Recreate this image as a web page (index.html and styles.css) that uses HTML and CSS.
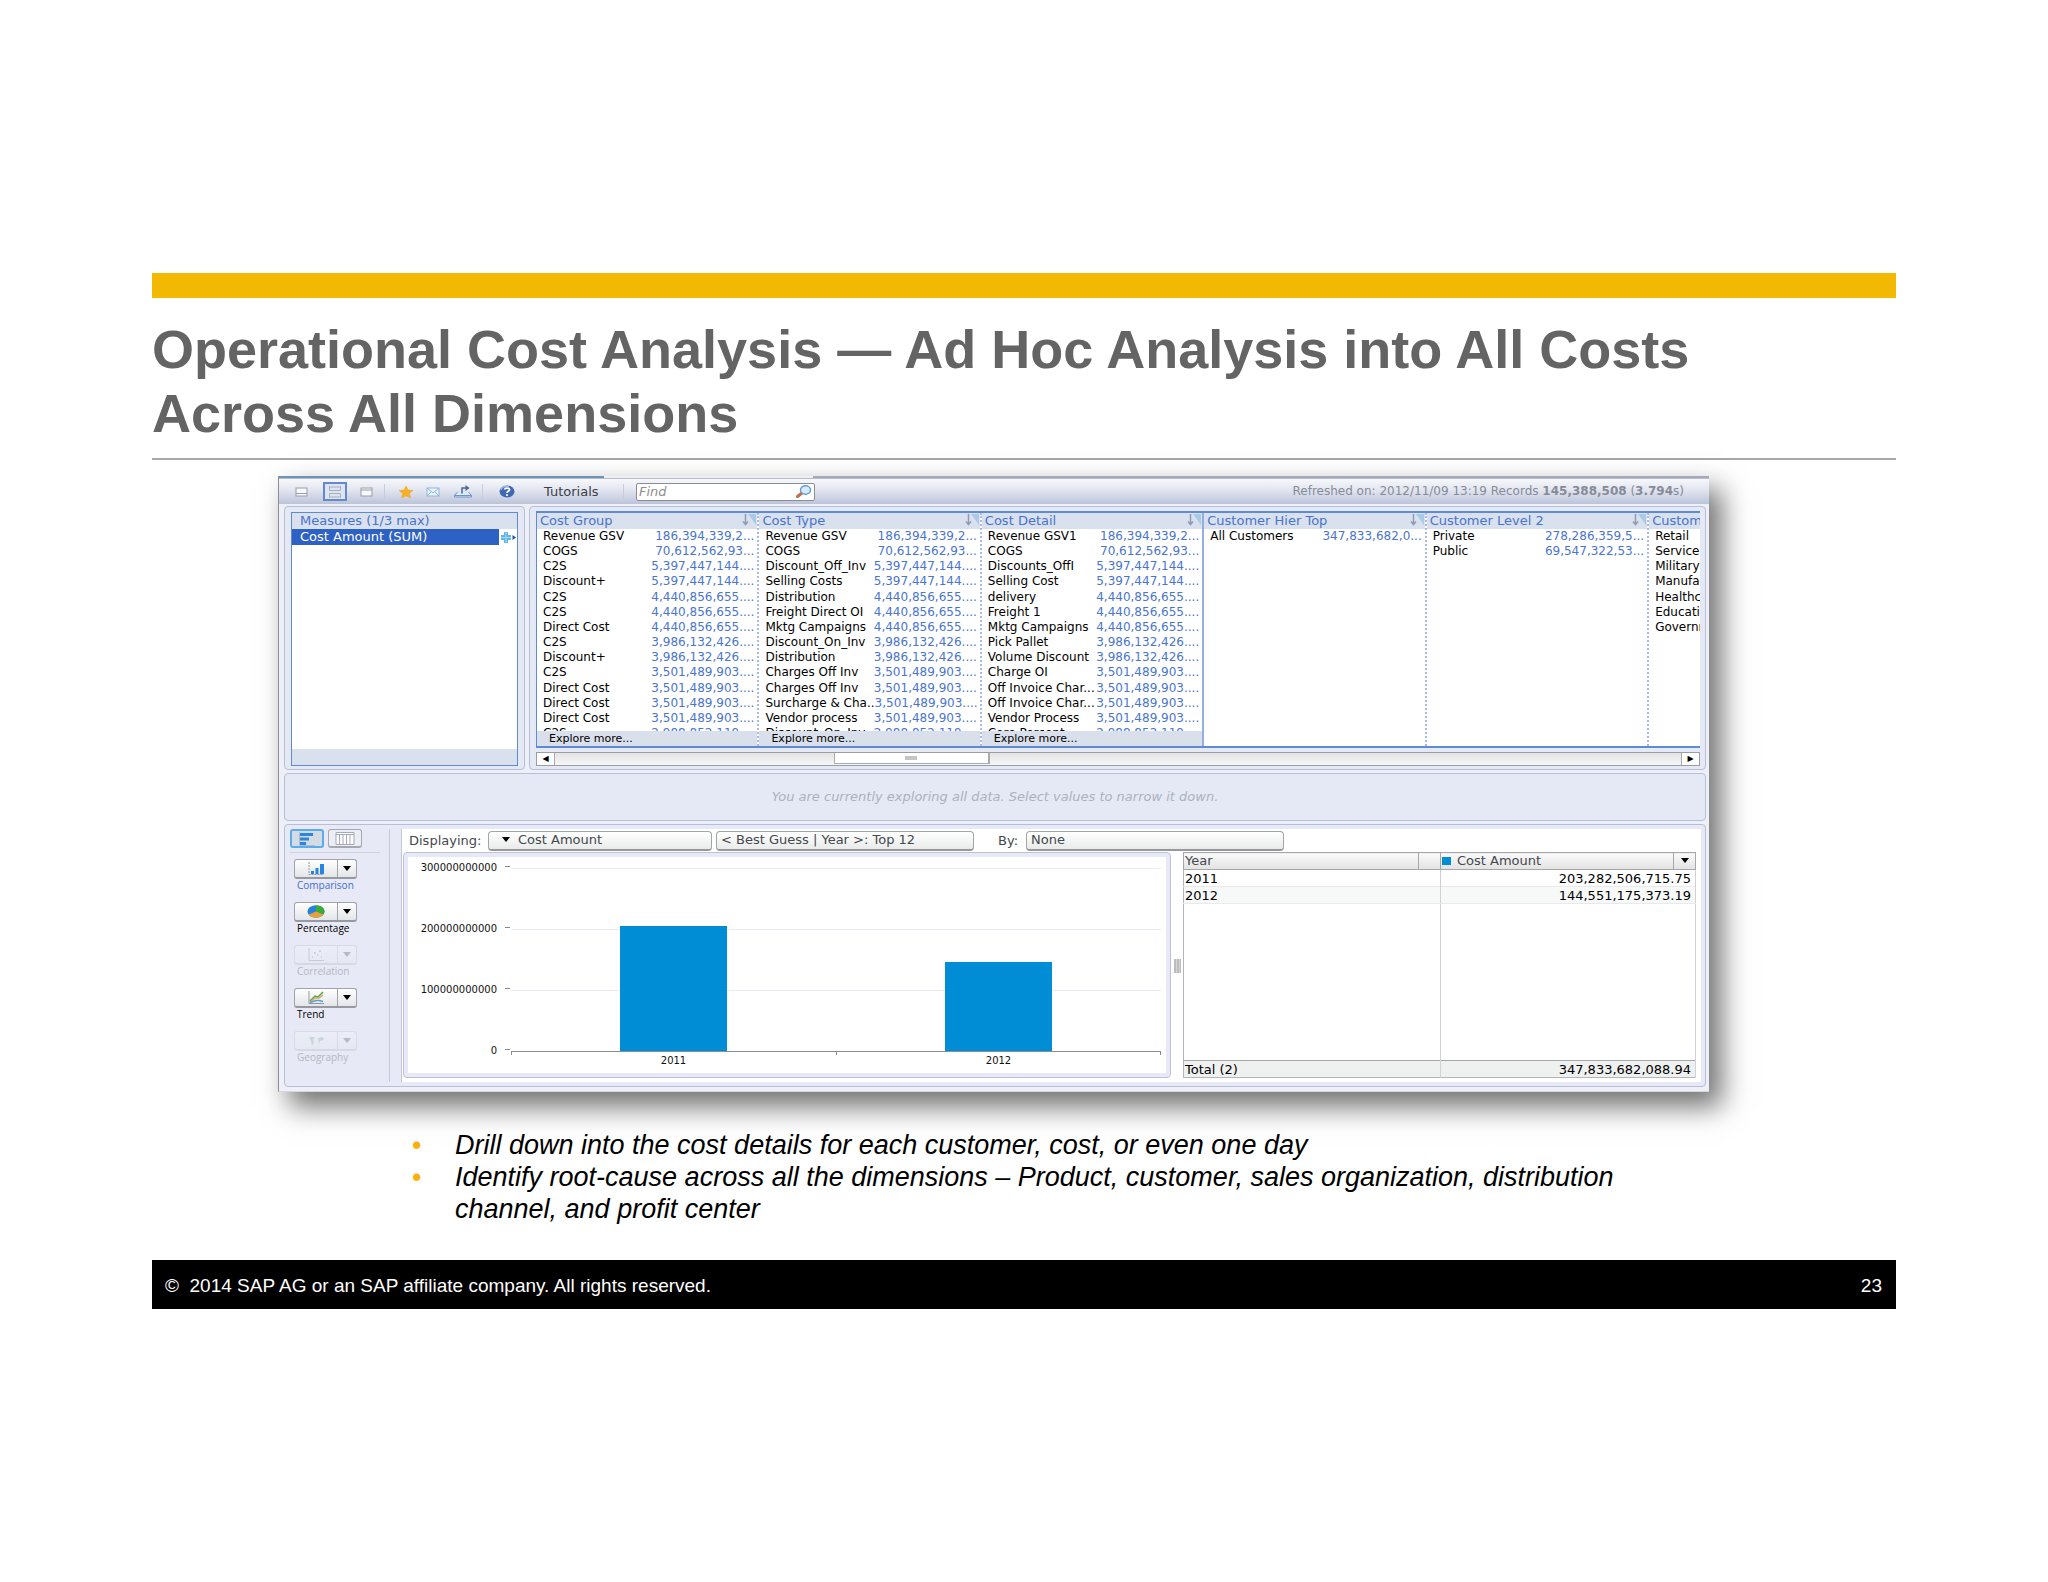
FILE: index.html
```html
<!DOCTYPE html>
<html lang="en">
<head>
<meta charset="utf-8">
<title>Operational Cost Analysis</title>
<link rel="stylesheet" href="styles.css">
</head>
<body>
<main class="slide">
  <div class="accent"></div>
  <h1 class="title">Operational Cost Analysis — Ad Hoc Analysis into All Costs<br>Across All Dimensions</h1>

  <section class="app" aria-label="Data explorer">
    <div class="topline"><i class="topline-blue"></i><i class="topline-light"></i></div>
    <header class="toolbar">
      <button class="tool layout" aria-label="Layout bottom"><svg width="14" height="10"><rect x="1" y="1" width="11" height="8" fill="#f8f9fc" stroke="#989dac"/><path d="M1 6.500h11" stroke="#989dac"/></svg></button>
      <button class="tool layout selected" aria-label="Layout split"><svg width="14" height="12"><path d="M1.500 0v4.500h11V0M1.500 11.500v-4h11v4M1 11h12M1 1h12" fill="none" stroke="#a9aebb"/></svg></button>
      <button class="tool layout" aria-label="Layout top"><svg width="14" height="10"><rect x="1" y="1" width="11" height="8" fill="#f8f9fc" stroke="#989dac"/><path d="M1 3h11" stroke="#989dac"/></svg></button>
      <span class="sep"></span>
      <button class="tool star" aria-label="Bookmark"><svg width="16" height="12" viewBox="0 0 16 12"><path d="M8 0l2 4 5 .5-3.700 3L12.500 12 8 9.700 3.500 12l1.200-4.500L1 4.500 6 4z" fill="#f9b023" stroke="#e9a02a" stroke-width=".5"/></svg></button>
      <button class="tool mail" aria-label="Email"><svg width="15" height="10" viewBox="0 0 15 10"><rect x="1" y="1" width="12" height="8" fill="#eaf4fd" stroke="#8fb6e0"/><path d="M1 1l6 5 6-5M1 9l4-4M13 9L9 5" fill="none" stroke="#8fb6e0"/></svg></button>
      <button class="tool export" aria-label="Export"><svg width="20" height="13" viewBox="0 0 20 13"><path d="M4.500 7L1.500 10.500V12h17v-1.500L15.500 7M1.500 10.500h17" fill="#dce9fa" stroke="#6d93cb"/><path d="M9 8.500V3h5" fill="none" stroke="#4d6892" stroke-width="1.500"/><path d="M12.500 0l4 3-4 3z" fill="#4d6892"/></svg></button>
      <span class="sep"></span>
      <button class="tool help" aria-label="Help"><svg width="16" height="13" viewBox="0 0 16 13"><ellipse cx="8" cy="6.500" rx="7.500" ry="6" fill="#4268b4"/><path d="M2 5a6 4 0 0 1 8-3.500" stroke="#9db8e4" stroke-width="1.500" fill="none"/><path d="M5.500 4.500C6 2.500 11 2.500 10.500 5 10.300 6.300 8 6 8 8M8 9.300V11" stroke="#fff" stroke-width="1.700" fill="none"/></svg></button>
      <a class="tutorials" href="#">Tutorials</a>
      <span class="sep"></span>
      <label class="find"><input type="text" placeholder="Find" aria-label="Find"><svg width="16" height="13" viewBox="0 0 16 13"><path d="M6 8L1.500 11.500" stroke="#c0704a" stroke-width="3" stroke-linecap="round"/><ellipse cx="9.500" cy="5" rx="5" ry="4.200" fill="#d6ebfc" stroke="#6a9bd8" stroke-width="1.500"/></svg></label>
      <p class="status">Refreshed on: 2012/11/09 13:19 Records <b>145,388,508</b> (<b>3.794</b>s)</p>
    </header>

    <div class="explore">
      <section class="panel measures">
        <div class="measure-box">
          <h2 class="head">Measures (1/3 max)</h2>
          <div class="measure"><span>Cost Amount (SUM)</span><svg width="17" height="13" viewBox="0 0 17 13"><path d="M4 1h4v11H4zM1 4h10v5H1z" fill="#62b5e9"/><path d="M1 6.500h10M6 1v11" stroke="#a5d8f6"/><path d="M12.500 4l3.500 2.500L12.500 9z" fill="#2450a8"/></svg></div>
          <div class="measure-foot"></div>
        </div>
      </section>
      <section class="panel facets">
        <div class="columns" id="columns"></div>
        <div class="scroll"><button aria-label="Scroll left">◀</button><div class="track"><div class="thumb"><i></i></div></div><button aria-label="Scroll right">▶</button></div>
      </section>
    </div>

    <p class="panel notice">You are currently exploring all data. Select values to narrow it down.</p>

    <section class="panel visual">
      <nav class="side">
        <div class="tabs">
          <button class="tab active" aria-label="Chart"><svg width="18" height="14" viewBox="0 0 18 14"><path d="M2 1h13v3H2zM2 5.500h9v3H2zM2 10h6v3H2z" fill="#2c86dc"/><path d="M1.500 0v13.500H17" stroke="#b3bccb" fill="none"/></svg></button>
          <button class="tab" aria-label="Table"><svg width="20" height="13" viewBox="0 0 20 13"><path d="M1 .5h18v12H1zM1 2.500h18M4.500 2v10M8 2v10M11.500 2v10M15 2v10" fill="#fff" stroke="#a2a9bd"/></svg></button>
        </div>
        <div class="kind current"><div class="split"><button aria-label="Comparison chart"><svg width="18" height="13" viewBox="0 0 18 13"><path d="M2 0v12.500h15" fill="none" stroke="#8f97a5" stroke-dasharray="2 1"/><path d="M4 9h3v3H4zM8.500 6h3v6h-3zM13 2h4v10h-4z" fill="#2886e2"/></svg></button><button aria-label="Comparison options"><i class="arrow"></i></button></div><span>Comparison</span></div>
        <div class="kind"><div class="split"><button aria-label="Percentage chart"><svg width="18" height="13" viewBox="0 0 18 13"><ellipse cx="9" cy="6.500" rx="8.500" ry="6.200" fill="#2582dc"/><path d="M9 6.500V.3a8.500 6.200 0 0 1 7.400 9.200z" fill="#3aab36"/><path d="M9 6.500l7.400 3a8.500 6.200 0 0 1-14.800 0z" fill="#e6a03a"/></svg></button><button aria-label="Percentage options"><i class="arrow"></i></button></div><span>Percentage</span></div>
        <div class="kind off"><div class="split"><button disabled aria-label="Correlation chart"><svg width="18" height="13" viewBox="0 0 18 13"><path d="M2 0v12.500h15" fill="none" stroke="#555"/><path d="M5 9h1M7 5h2M10 7h1M12 3h2M14 9h1" stroke="#777" stroke-width="2"/></svg></button><button disabled aria-label="Correlation options"><i class="arrow"></i></button></div><span>Correlation</span></div>
        <div class="kind"><div class="split"><button aria-label="Trend chart"><svg width="18" height="13" viewBox="0 0 18 13"><path d="M2 0v12.500h15" fill="none" stroke="#8f97a5"/><path d="M3 10l5-5 3 1 5-5" fill="none" stroke="#4eae46" stroke-width="1.500"/><path d="M3 11l5-4h4l4-3" fill="none" stroke="#e1a257" stroke-width="1.500"/><path d="M3 11.500l6-2h3l4 1" fill="none" stroke="#5d9ee0" stroke-width="1.500"/></svg></button><button aria-label="Trend options"><i class="arrow"></i></button></div><span>Trend</span></div>
        <div class="kind off"><div class="split"><button disabled aria-label="Geography chart"><svg width="18" height="13" viewBox="0 0 18 13"><path d="M2 3h6L6 6l1 2-2 4-1-5zM11 4l5-1 1 3-4 1-1 3z" fill="#4c9a52"/></svg></button><button disabled aria-label="Geography options"><i class="arrow"></i></button></div><span>Geography</span></div>
      </nav>
      <div class="canvas">
        <div class="controls">
          <span class="lbl">Displaying:</span>
          <button class="pick first"><i class="arrow"></i>Cost Amount</button>
          <button class="pick">&lt; Best Guess | Year &gt;: Top 12</button>
          <span class="lbl by">By:</span>
          <button class="pick">None</button>
        </div>
        <div class="results">
          <div class="chart">
            <div class="yaxis"><span>300000000000</span><span>200000000000</span><span>100000000000</span><span>0</span></div>
            <div class="plot">
              <div class="grid"><i></i><i></i><i></i></div>
              <div class="bars"><div class="slot"><div class="bar" style="height:125px"></div></div><div class="slot"><div class="bar" style="height:89px"></div></div></div>
              <div class="ticks"><i></i><i></i></div>
              <div class="xaxis"><span>2011</span><span>2012</span></div>
            </div>
          </div>
          <div class="grip"><i></i></div>
          <table class="data">
            <thead><tr><th class="c1">Year</th><th class="c2"></th><th class="c3"><i class="swatch"></i>Cost Amount</th><th class="c4"><button aria-label="Column menu"><i class="arrow"></i></button></th></tr></thead>
            <tbody>
              <tr><td colspan="2">2011</td><td colspan="2">203,282,506,715.75</td></tr>
              <tr class="alt"><td colspan="2">2012</td><td colspan="2">144,551,175,373.19</td></tr>
              <tr class="fill"><td colspan="2"></td><td colspan="2"></td></tr>
            </tbody>
            <tfoot><tr><td colspan="2">Total (2)</td><td colspan="2">347,833,682,088.94</td></tr></tfoot>
          </table>
        </div>
      </div>
    </section>
  </section>

  <ul class="points">
    <li>Drill down into the cost details for each customer, cost, or even one day</li>
    <li>Identify root-cause across all the dimensions – Product, customer, sales organization, distribution channel, and profit center</li>
  </ul>

  <footer class="foot"><span>©&nbsp; 2014 SAP AG or an SAP affiliate company. All rights reserved.</span><span>23</span></footer>
</main>
<script src="facets.js"></script>
</body>
</html>
```
FILE: styles.css
```css
* { box-sizing: border-box; }

body {
  margin: 0;
  background: #fff;
  color: #000;
  font-family: "Liberation Sans", Arial, sans-serif;
}

button, input { font: inherit; color: inherit; margin: 0; padding: 0; }
h1, h2, p, ul { margin: 0; padding: 0; }
svg { display: block; }

.slide { padding: 273px 152px 0; }
.accent { height: 25px; background: #f3b900; }
.title {
  height: 162px;
  padding-top: 19px;
  border-bottom: 2px solid #a8a8a8;
  color: #646464;
  font-size: 54px;
  line-height: 64px;
}

/* explorer window */
.app {
  margin: 16px 187px 0 126px;
  background: #eef0f7;
  border-left: 1px solid #8d8f94;
  border-bottom: 1px solid #d8d8d8;
  box-shadow: 12px 14px 26px 1px rgba(0, 0, 0, .55);
  font-family: "DejaVu Sans", Verdana, sans-serif;
  font-size: 13px;
  line-height: 15px;
}
.topline { display: flex; height: 3px; background: #a5a9c0; border-bottom: 1px solid #b9bbc6; }
.topline-blue { width: 325px; background: #6e93b8; }
.topline-light { width: 209px; background: #eceef2; }

.toolbar {
  display: flex;
  align-items: center;
  height: 25px;
  padding: 0 25px 0 11px;
  background: linear-gradient(#f6f8fb, #e2e5ef 45%, #bcc4d9);
  color: #3c3f48;
}
.tool { display: grid; place-items: center; border: 0; background: none; }
.layout { width: 24px; height: 19px; margin-right: 7px; }
.layout.selected { border: 2px solid #6488d0; background: #dde5f3; width: 24px; margin: 0 8px 0 2px; }
.layout + .sep { margin-left: -2px; }
.sep { width: 1px; height: 15px; background: #c9cdd9; }
.star { margin-left: 13px; }
.mail { margin-left: 12px; }
.export { margin-left: 12px; margin-right: 9px; }
.help { margin: 0 29px 0 16px; }
.tutorials { width: 79px; color: inherit; text-decoration: none; }
.find {
  display: flex;
  align-items: center;
  width: 179px;
  height: 18px;
  margin-left: 12px;
  padding: 0 2px;
  background: #fff;
  border: 1px solid #8a8d94;
  border-radius: 2px;
}
.find input { flex: 1; min-width: 0; border: 0; outline: 0; background: none; font-style: italic; line-height: 14px; }
.find input::placeholder { color: #8f8f8f; opacity: 1; }
.status { margin-left: auto; color: #868b98; font-size: 12px; }

.panel { background: #e4e9f5; border: 1px solid #b8bdd8; border-radius: 4px; }
.explore { display: flex; gap: 4px; padding: 2px 3px 0 5px; }
.measures { flex: none; width: 241px; height: 264px; padding: 5px 6px; }
.measure-box { display: flex; flex-direction: column; height: 254px; background: #fff; border: 1px solid #5f8bd3; }
.head { height: 16px; padding: 0 8px; background: #dae1ee; color: #4873cc; font-size: 13px; font-weight: 400; line-height: 16px; white-space: nowrap; }
.measure { display: flex; align-items: center; gap: 1px; color: #fff; }
.measure span { flex: 1; padding-left: 8px; background: #2d61c4; line-height: 16px; }
.measure-foot { margin-top: auto; height: 16px; background: #dae1ee; }

.facets { flex: 1; min-width: 0; padding: 4px 5px 0 6px; }
.columns {
  display: grid;
  grid-template-columns: repeat(5, 223fr) 51fr;
  height: 237px;
  overflow: hidden;
  background: #fff;
  border: solid #5f8bd3;
  border-width: 2px 0 2px 1px;
}
.facet { min-width: 0; overflow: hidden; border-right: 2px dotted #a8b9ea; }
.facet:nth-child(3) { border-right: 2px solid #93afe0; }
.facet:last-child { border-right: 0; }
.facet .head { display: flex; justify-content: space-between; padding: 0 0 0 3px; }
.values { display: grid; grid-template-rows: repeat(13, 1fr) 5px; height: 202px; list-style: none; font-size: 12px; }
.values li { display: flex; justify-content: space-between; overflow: hidden; padding: 0 3px 0 6px; white-space: nowrap; }
.values b { color: #4a75cf; font-weight: 400; }
.more { display: block; width: 100%; height: 15px; padding-left: 12px; border: 0; background: #dadfec; text-align: left; font-size: 11px; line-height: 14px; }

.scroll { display: flex; height: 14px; margin-top: 4px; border: 1px solid #9b9da2; }
.scroll button { width: 17px; border: 0; background: #fff; font-size: 8px; line-height: 10px; }
.track { flex: 1; padding-left: 24%; border: solid #a6a8ad; border-width: 0 1px; background: linear-gradient(#e4e4e4, #f6f6f6); }
.thumb { width: 156px; height: 11px; padding-top: 3px; background: #fff; border: solid #a9abb0; border-width: 0 2px 1px 1px; }
.thumb i { display: block; width: 12px; height: 4px; margin: 0 auto; background: #c5c5c5; }

.notice { margin: 3px 3px 3px 5px; height: 48px; line-height: 45px; text-align: center; font-style: italic; color: #acb1bd; }

.visual { display: flex; height: 263px; margin: 0 3px 4px 5px; padding: 4px; background: #e7e9f6; }
.side { width: 101px; flex: none; padding-left: 1px; border-right: 1px solid #c6c8da; }
.tabs { display: flex; gap: 4px; width: 90px; height: 24px; margin-bottom: 6px; border-bottom: 1px solid #d0d2e0; }
.tab { display: grid; place-items: center; width: 34px; height: 19px; border: 1px solid #a5a8b0; border-bottom-width: 2px; border-radius: 3px; background: #eceef3; }
.tab.active { border: 2px solid #5aaced; background: #d3dce4; }
.kind { height: 43px; padding-left: 4px; font-family: "Open Sans", sans-serif; font-size: 10px; line-height: 13px; }
.kind span { display: block; padding-left: 3px; }
.current span { color: #3f6fd0; }
.split { display: flex; width: 63px; height: 20px; border: 1px solid #a0a3aa; border-bottom: 2px solid #96999f; border-radius: 3px; background: linear-gradient(#fff, #e4e5e8); }
.split button { display: grid; place-items: center; flex: 1; border: 0; background: none; }
.split button + button { flex: none; width: 19px; border-left: 1px solid #a0a3aa; }
.off .split { opacity: .2; }
.off span { color: #b4b7c3; }
.arrow { display: inline-block; width: 0; border: solid transparent; border-width: 5px 4px 0; border-top-color: #000; }

.canvas { display: flex; flex-direction: column; flex: 1; min-width: 0; margin-left: 11px; padding-left: 1px; background: #fff; border-left: 1px solid #c6c8da; }
.controls { display: flex; align-items: center; height: 23px; padding-left: 6px; color: #45484d; }
.lbl { width: 79px; }
.lbl.by { width: 28px; margin-left: 20px; }
.pick { width: 258px; height: 20px; margin-right: 4px; padding-left: 4px; border: 1px solid #a3a5a9; border-bottom: 2px solid #96989c; border-radius: 4px; background: linear-gradient(#fff, #e9ebeb); text-align: left; line-height: 16px; }
.pick.first { width: 224px; padding-left: 13px; }
.pick .arrow { margin: 0 8px 2px 0; }

.results { display: flex; flex: 1; min-height: 0; padding: 0 5px 2px 0; }
.chart { display: flex; flex: 1; min-width: 0; height: 226px; background: #fff; border: 1px solid #bfc0dd; border-radius: 4px; box-shadow: inset 0 0 0 4px #e8e9f7; font-size: 10px; line-height: 12px; color: #111; }
.yaxis { width: 106px; padding-top: 9px; text-align: right; }
.yaxis span { display: block; height: 61px; white-space: nowrap; }
.yaxis span::after { content: ""; display: inline-block; width: 5px; height: 1px; margin: 0 0 3px 8px; background: #888; vertical-align: middle; }
.plot { flex: 1; margin: 15px 9px 0 1px; }
.grid { display: grid; grid-auto-rows: 61px; }
.grid i { border-top: 1px solid #e9eaf2; }
.bars, .xaxis { display: grid; grid-template-columns: 1fr 1fr; }
.bars { height: 183px; margin-top: -183px; }
.slot { display: flex; align-items: flex-end; justify-content: center; }
.bar { width: 33%; background: #008dd6; }
.ticks { display: grid; grid-template-columns: 1fr 1fr; height: 4px; border: solid #8c8d94; border-width: 1px 1px 0; }
.ticks i + i { border-left: 1px solid #8c8d94; }
.xaxis { text-align: center; }
.grip { display: grid; place-items: center; width: 12px; }
.grip i { width: 7px; height: 14px; background: repeating-linear-gradient(90deg, #bdbdbd 0 2px, #d5d5d5 2px 3px); }

.data { flex: none; width: 513px; height: 226px; border-collapse: collapse; table-layout: fixed; border: 1px solid #b3b5b8; }
.data th, .data td { height: 17px; padding: 0 4px 0 1px; text-align: left; font-weight: 400; line-height: 15px; border-right: 1px solid #cfd1d6; }
.data th { border: 1px solid #a5a7aa; padding-bottom: 1px; background: linear-gradient(#fafafa, #e2e2e2); color: #45484d; line-height: 14px; }
.data td + td { text-align: right; }
.data .alt td { background: #f7f8f8; border-top: 1px solid #e8e9ea; border-bottom: 1px solid #e8e9ea; }
.data .fill td { height: auto; }
.data tfoot td { background: #eff0f0; border-top: 1px solid #a5a7aa; }
.data .c1 { width: 235px; }
.data .c2 { width: 22px; }
.data .c4 { width: 22px; padding: 0; text-align: center; }
.data button { border: 0; background: none; }
.data .arrow { margin-bottom: 2px; }
.swatch { display: inline-block; width: 9px; height: 8px; margin-right: 6px; background: #008dd6; }

.points { margin: 37px 247px 0 260px; list-style: none; font-size: 27px; font-style: italic; line-height: 32px; }
.points li { display: flex; }
.points li::before { content: "•"; flex: none; width: 43px; color: #fbb010; font-style: normal; }

.foot { display: flex; justify-content: space-between; align-items: center; height: 49px; margin-top: 35px; padding: 2px 14px 0 13px; background: #000; color: #fff; font-size: 19px; }
```
FILE: facets.js
```js
const amounts = ["186,394,339,2...", "70,612,562,93...", "5,397,447,144....", "5,397,447,144....", "4,440,856,655....", "4,440,856,655....", "4,440,856,655....", "3,986,132,426....", "3,986,132,426....", "3,501,489,903....", "3,501,489,903....", "3,501,489,903....", "3,501,489,903....", "2,988,852,119...."];

const facets = [
  { name: "Cost Group", more: true, amounts, items: ["Revenue GSV", "COGS", "C2S", "Discount+", "C2S", "C2S", "Direct Cost", "C2S", "Discount+", "C2S", "Direct Cost", "Direct Cost", "Direct Cost", "C2S"] },
  { name: "Cost Type", more: true, amounts, items: ["Revenue GSV", "COGS", "Discount_Off_Inv", "Selling Costs", "Distribution", "Freight Direct OI", "Mktg Campaigns", "Discount_On_Inv", "Distribution", "Charges Off Inv", "Charges Off Inv", "Surcharge & Cha..", "Vendor process", "Discount_On_Inv"] },
  { name: "Cost Detail", more: true, amounts, items: ["Revenue GSV1", "COGS", "Discounts_OffI", "Selling Cost", "delivery", "Freight 1", "Mktg Campaigns", "Pick Pallet", "Volume Discount", "Charge OI", "Off Invoice Char...", "Off Invoice Char...", "Vendor Process", "Core Percent"] },
  { name: "Customer Hier Top", amounts: ["347,833,682,0..."], items: ["All Customers"] },
  { name: "Customer Level 2", amounts: ["278,286,359,5...", "69,547,322,53..."], items: ["Private", "Public"] },
  { name: "Custom", last: true, amounts: [], items: ["Retail", "Service", "Military", "Manufac", "Healthc", "Educati", "Governr"] }
];

const sortIcon = '<svg width="16" height="14" viewBox="0 0 16 14"><path d="M4.500 1v10M2 8.500l2.500 3L7 8.500" fill="none" stroke="#8f9bb4" stroke-width="1.500"/><path d="M7 1h8v11z" fill="#a9cbe6"/></svg>';

document.getElementById("columns").innerHTML = facets.map(f => `
  <section class="facet">
    <h2 class="head"><span>${f.name}</span>${f.last ? "" : sortIcon}</h2>
    <ul class="values">${f.items.map((t, i) => `<li><span>${t.replace("&", "&amp;")}</span>${f.amounts[i] ? `<b>${f.amounts[i]}</b>` : ""}</li>`).join("")}</ul>
    ${f.more ? '<button class="more">Explore more...</button>' : ""}
  </section>`).join("");
```
